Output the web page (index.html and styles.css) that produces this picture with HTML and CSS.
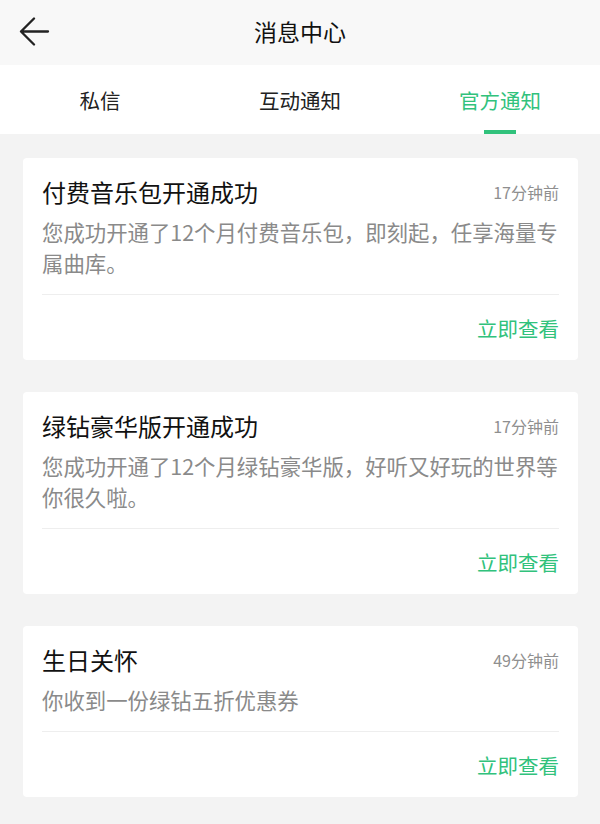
FILE: index.html
```html
<!DOCTYPE html>
<html lang="zh-CN">
<head>
    <meta charset="UTF-8">
    <meta name="viewport" content="width=device-width, initial-scale=1.0">
    <title>消息中心</title>
    <link rel="stylesheet" href="styles.css">
</head>
<body>
    <header class="top-bar">
        <a class="back-btn" href="#">
            <svg width="32" height="32" viewBox="0 0 32 32">
                <path d="M3 14.5 H30 M16 1.5 L3 14.5 L16 27.5" fill="none" stroke="#222" stroke-width="2.3" stroke-linecap="round" stroke-linejoin="round"/>
            </svg>
        </a>
        <h1 class="page-title">消息中心</h1>
    </header>

    <nav class="tabs">
        <a class="tab" href="#">私信</a>
        <a class="tab" href="#">互动通知</a>
        <a class="tab active" href="#">官方通知</a>
    </nav>

    <main class="msg-list">
        <div class="msg-card">
            <div class="msg-body">
                <div class="msg-head">
                    <h2 class="msg-title">付费音乐包开通成功</h2>
                    <span class="msg-time">17分钟前</span>
                </div>
                <p class="msg-text">您成功开通了12个月付费音乐包，即刻起，任享海量专属曲库。</p>
            </div>
            <div class="msg-foot"><a href="#">立即查看</a></div>
        </div>

        <div class="msg-card">
            <div class="msg-body">
                <div class="msg-head">
                    <h2 class="msg-title">绿钻豪华版开通成功</h2>
                    <span class="msg-time">17分钟前</span>
                </div>
                <p class="msg-text">您成功开通了12个月绿钻豪华版，好听又好玩的世界等你很久啦。</p>
            </div>
            <div class="msg-foot"><a href="#">立即查看</a></div>
        </div>

        <div class="msg-card">
            <div class="msg-body">
                <div class="msg-head">
                    <h2 class="msg-title">生日关怀</h2>
                    <span class="msg-time">49分钟前</span>
                </div>
                <p class="msg-text">你收到一份绿钻五折优惠券</p>
            </div>
            <div class="msg-foot"><a href="#">立即查看</a></div>
        </div>
    </main>
</body>
</html>
```

FILE: styles.css
```css
/* page */
body {
    margin: 0;
    background: #f3f3f3;
    font-family: "Noto Sans CJK SC", "Noto Sans", sans-serif;
    color: #111;
}

a {
    text-decoration: none;
}

/* top bar */
.top-bar {
    height: 65px;
    background: #f8f8f8;
    display: flex;
    align-items: center;
    justify-content: center;
    position: relative;
}

.back-btn {
    position: absolute;
    left: 18px;
    top: 17px;
    width: 32px;
    height: 32px;
}

.back-btn svg {
    display: block;
}

.page-title {
    margin: 0 0 3px;
    font-size: 23px;
    font-weight: normal;
    color: #111;
    line-height: 32px;
}

/* tabs */
.tabs {
    display: flex;
    background: #fff;
    height: 69px;
}

.tab {
    flex: 1;
    position: relative;
    text-align: center;
    font-size: 20.5px;
    line-height: 36px;
    padding-top: 17px;
    color: #222;
}

.tab.active {
    color: #31c27c;
}

.tab.active::after {
    content: "";
    position: absolute;
    left: 50%;
    bottom: 0;
    width: 32px;
    height: 4px;
    margin-left: -16px;
    background: #31c27c;
}

/* message cards */
.msg-list {
    padding: 24px 22px 24px 23px;
    display: flex;
    flex-direction: column;
    gap: 32px;
}

.msg-card {
    background: #fff;
    border-radius: 4px;
    padding: 0 19px;
}

.msg-body {
    padding: 16px 0 16px;
    border-bottom: 1px solid #eeeeee;
}

.msg-head {
    display: flex;
    justify-content: space-between;
    align-items: center;
    height: 34px;
}

.msg-title {
    margin: 0;
    font-size: 24px;
    font-weight: normal;
    color: #111;
}

.msg-time {
    font-size: 16px;
    color: #8f8f8f;
    padding-top: 2px;
}

.msg-text {
    margin: 8px 0 0;
    font-size: 21.4px;
    line-height: 31px;
    color: #8a8a8a;
}

.msg-foot {
    text-align: right;
    padding: 16px 0 15px;
    font-size: 20.5px;
    line-height: 34px;
}

.msg-foot a {
    color: #31c27c;
}
```
